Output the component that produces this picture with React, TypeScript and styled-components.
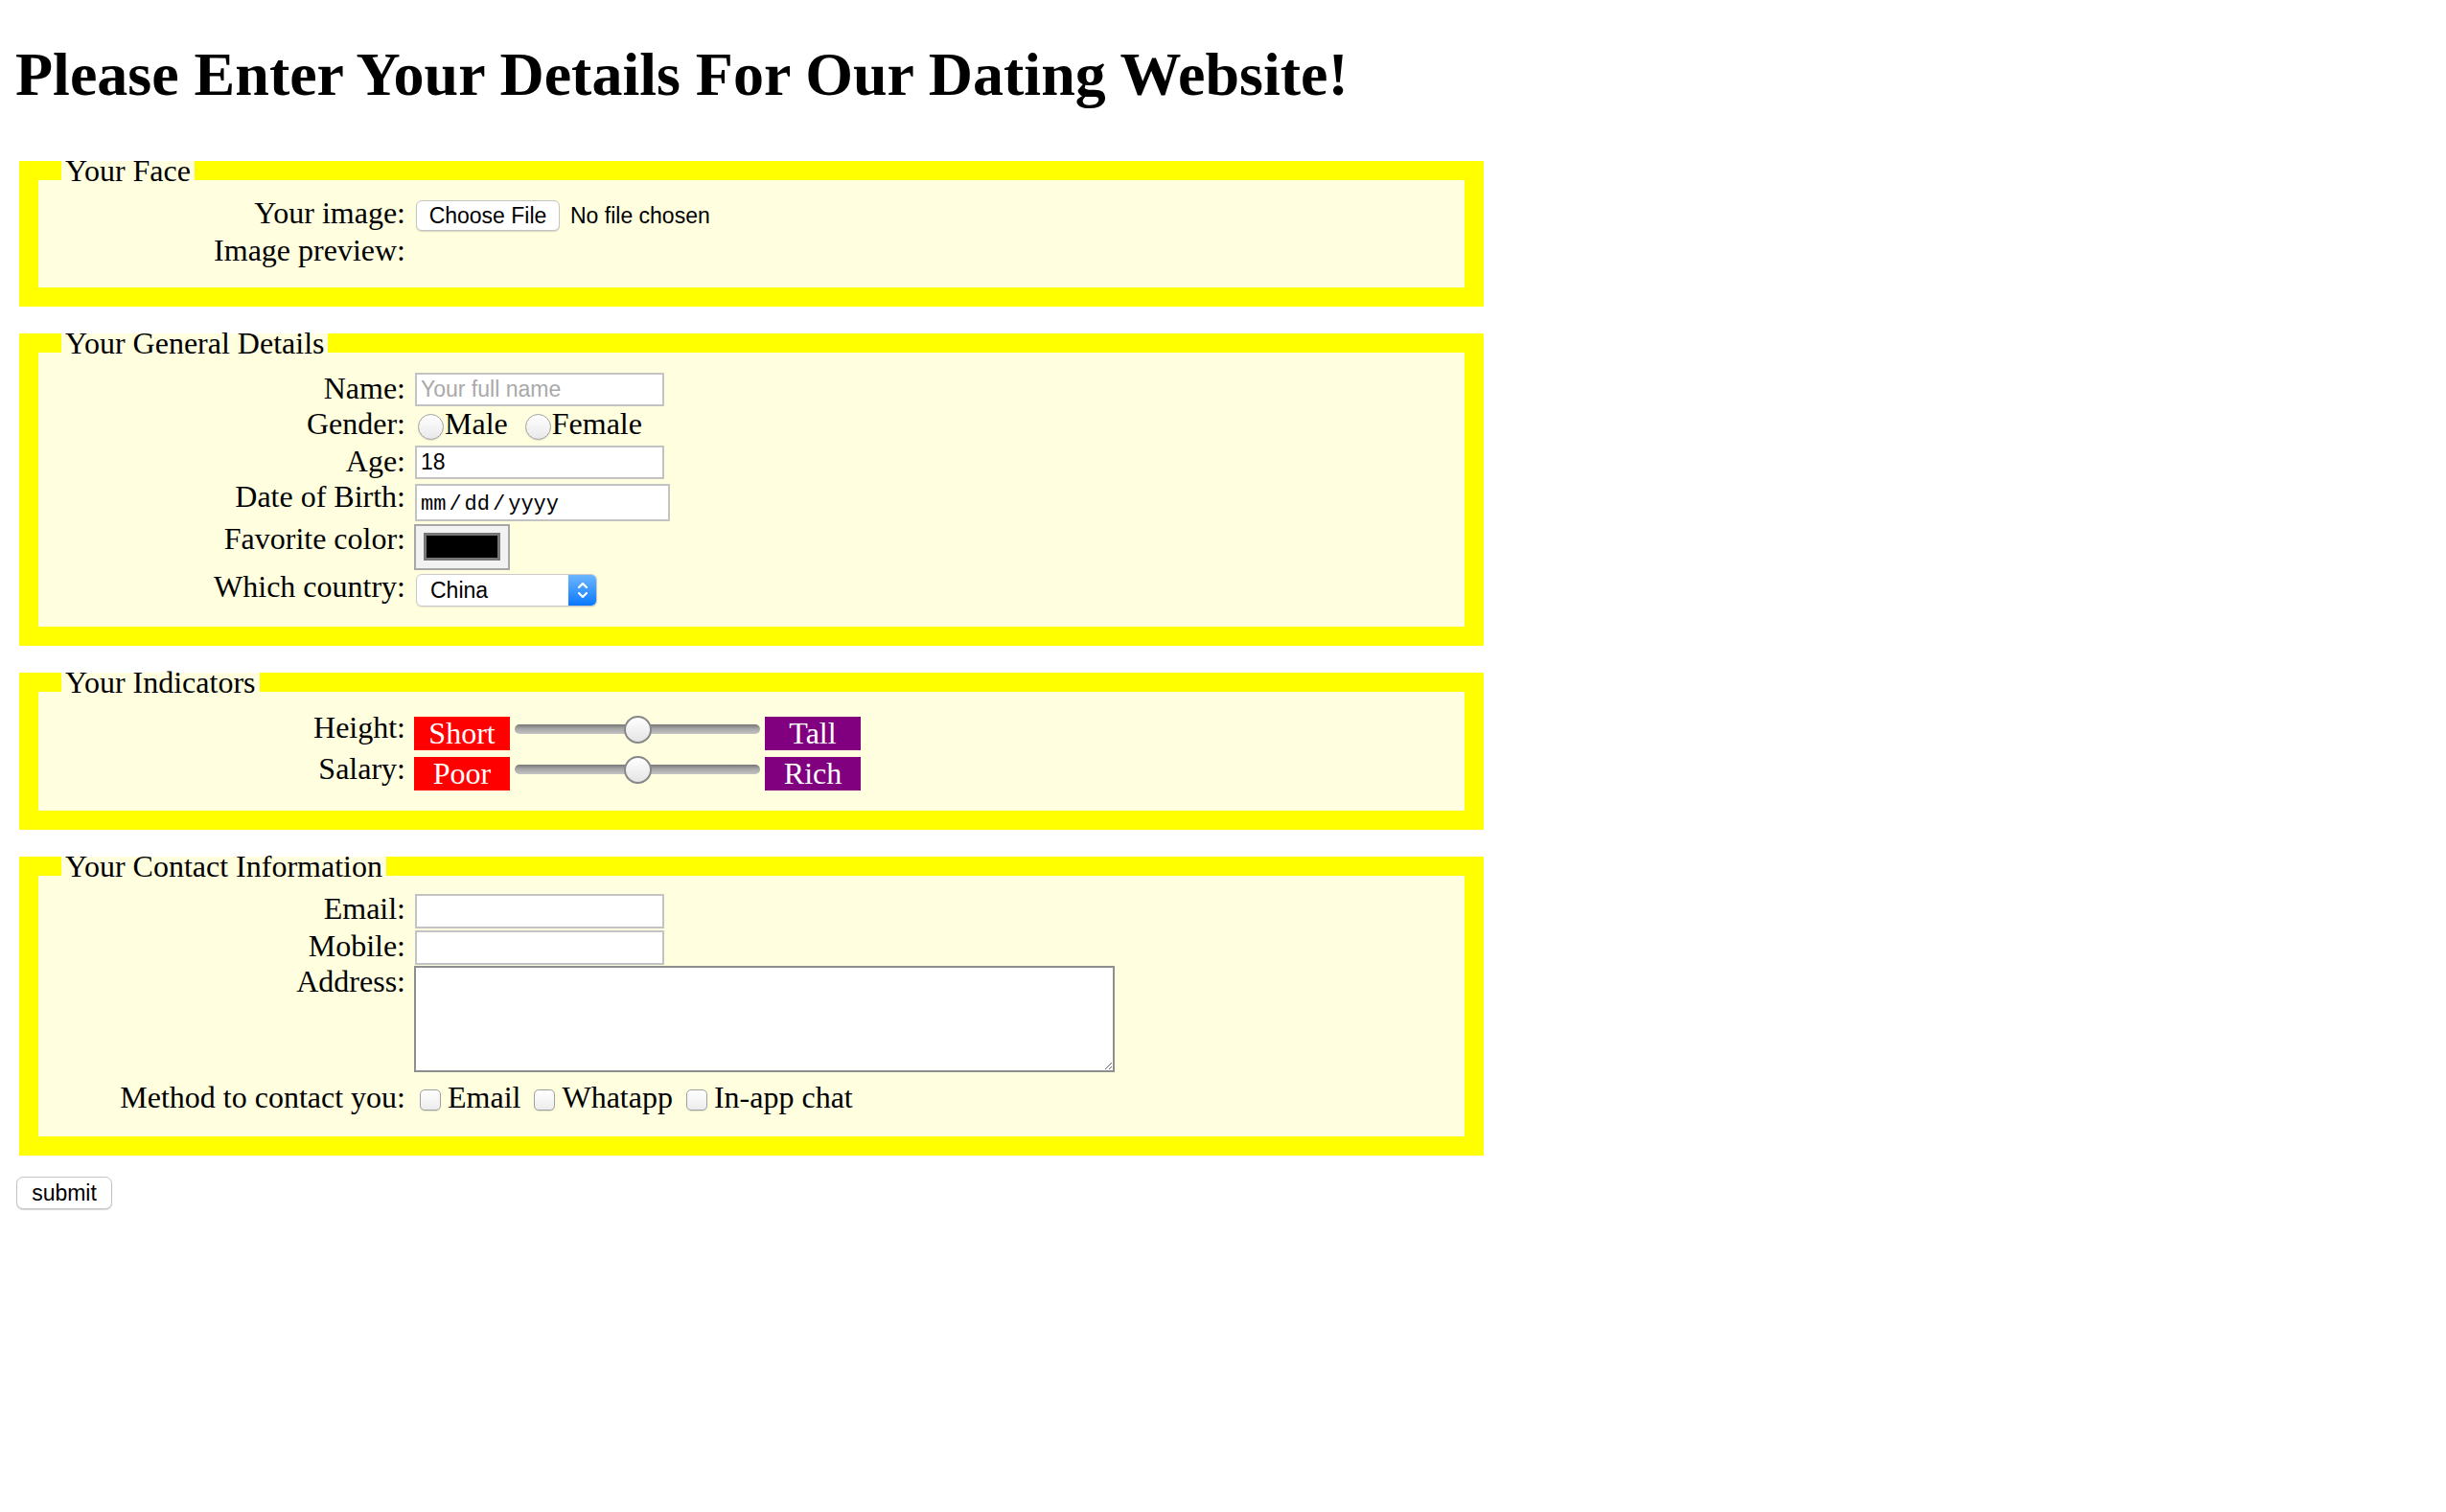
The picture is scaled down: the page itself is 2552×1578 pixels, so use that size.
import React from "react";
import styled, { createGlobalStyle } from "styled-components";

const GlobalStyle = createGlobalStyle`
  html, body { margin: 0; padding: 0; background: #ffffff; }
  body {
    font-family: "Liberation Serif", "Times New Roman", serif;
    font-size: 32px;
    color: #000000;
  }
  * { box-sizing: border-box; }
`;

const Page = styled.div`
  padding: 0 16px 40px;
`;

const Title = styled.h1`
  margin: 42px 0 46px;
  font-size: 64px;
  line-height: 72px;
  font-weight: bold;
`;

const Form = styled.form`
  width: 1536px;
`;

const Panel = styled.fieldset<{ $pt: number; $pb: number }>`
  margin: 0 4px 20px;
  border: 20px solid #ffff00;
  background: #ffffe0;
  padding: ${(p) => p.$pt}px 24px ${(p) => p.$pb}px;
  min-width: 0;
`;

const Legend = styled.legend`
  padding: 0 4px;
  font-size: 32px;
  line-height: 36px;
`;

const Row = styled.div<{ $h: number }>`
  display: flex;
  align-items: flex-start;
  height: ${(p) => p.$h}px;
`;

const Label = styled.label`
  width: 359px;
  flex: none;
  text-align: right;
  line-height: 36px;
  white-space: nowrap;
`;

const Control = styled.div<{ $top?: number; $left?: number }>`
  display: flex;
  align-items: flex-start;
  margin-top: ${(p) => p.$top ?? 0}px;
  margin-left: ${(p) => 10 + (p.$left ?? 0)}px;
`;

const sans = `"Liberation Sans", Arial, Helvetica, sans-serif`;

const TextInput = styled.input<{ $h?: number }>`
  width: 260px;
  height: ${(p) => p.$h ?? 36}px;
  margin: 0;
  border: 2px solid #c3c3c3;
  border-radius: 0;
  background: #ffffff;
  padding: 0 4px;
  font: 23px ${sans};
  color: #000000;
  outline: none;
  &::placeholder { color: #a9a9a9; }
`;

const FileButton = styled.button`
  width: 150px;
  height: 32px;
  margin: 0;
  padding: 0;
  background: #ffffff;
  border: 1px solid #c4c4c4;
  border-radius: 6px;
  box-shadow: 0 1px 1px rgba(0, 0, 0, 0.16);
  font: 23px ${sans};
  color: #000000;
`;

const FileNote = styled.span`
  margin-left: 11px;
  font: 23px ${sans};
  line-height: 32px;
`;

const Options = styled.div<{ $gap: number }>`
  display: flex;
  align-items: flex-start;
  gap: ${(p) => p.$gap}px;
`;

const Option = styled.label<{ $gap: number }>`
  display: flex;
  align-items: flex-start;
  gap: ${(p) => p.$gap}px;
  line-height: 36px;
  white-space: nowrap;
`;

const Radio = styled.input.attrs({ type: "radio" })`
  appearance: none;
  -webkit-appearance: none;
  flex: none;
  width: 27px;
  height: 27px;
  margin: 8px 0 0;
  border-radius: 50%;
  border: 1.5px solid #a0a0a0;
  background: linear-gradient(#ffffff, #e9e9e9);
  box-shadow: 0 1px 1px rgba(0, 0, 0, 0.12);
`;

const Checkbox = styled.input.attrs({ type: "checkbox" })`
  appearance: none;
  -webkit-appearance: none;
  flex: none;
  width: 22px;
  height: 22px;
  margin: 10px 0 0;
  border-radius: 5px;
  border: 1.5px solid #a0a0a0;
  background: linear-gradient(#ffffff, #ececec);
  box-shadow: 0 1px 1px rgba(0, 0, 0, 0.12);
`;

const DateField = styled.div`
  width: 266px;
  height: 39px;
  border: 2px solid #c3c3c3;
  background: #ffffff;
  padding: 4px 4px 0;
  display: flex;
  align-items: center;
  font: 22px "Liberation Mono", "Courier New", monospace;
`;

const Sep = styled.span`
  margin: 0 3px;
`;

const ColorWell = styled.input.attrs({ type: "color" })`
  width: 100px;
  height: 48px;
  margin: 0;
  padding: 0;
  border: 2px solid #a7a7a7;
  border-radius: 0;
  background: #f2f2f2;
  &::-webkit-color-swatch-wrapper { padding: 7px 8px 8px; }
  &::-webkit-color-swatch { border: 3px solid #777777; border-radius: 0; }
`;

const SelectWrap = styled.div`
  display: flex;
  width: 189px;
  height: 34px;
  border: 1px solid #cacaca;
  border-radius: 6px;
  overflow: hidden;
  background: #ffffff;
  box-shadow: 0 1px 1px rgba(0, 0, 0, 0.1);
`;

const Select = styled.select`
  appearance: none;
  -webkit-appearance: none;
  flex: 1;
  min-width: 0;
  border: 0;
  background: transparent;
  margin: 0;
  padding: 0 0 0 14px;
  font: 23px ${sans};
  color: #000000;
  outline: none;
`;

const SelectArrows = styled.span`
  width: 29px;
  flex: none;
  display: flex;
  align-items: center;
  justify-content: center;
  background: linear-gradient(#6db6ff, #0a79ff);
`;

const Tag = styled.span<{ $color: string }>`
  width: 100px;
  height: 35px;
  flex: none;
  background: ${(p) => p.$color};
  color: #ffffff;
  text-align: center;
  line-height: 35px;
  font-size: 32px;
`;

const Slider = styled.input.attrs({ type: "range" })`
  -webkit-appearance: none;
  appearance: none;
  width: 256px;
  height: 28px;
  margin: -1px 5px 0;
  padding: 0;
  background: transparent;
  &::-webkit-slider-runnable-track {
    height: 10px;
    border-radius: 5px;
    background: linear-gradient(#777777, #a6a6a6 45%, #c4c4c4);
  }
  &::-webkit-slider-thumb {
    -webkit-appearance: none;
    width: 29px;
    height: 29px;
    margin-top: -9.5px;
    border-radius: 50%;
    border: 2px solid #888888;
    background: linear-gradient(#ffffff, #e4e4e4);
  }
`;

const TextArea = styled.textarea`
  width: 731px;
  height: 111px;
  margin: 0;
  border: 2px solid #8e8e8e;
  background: #ffffff;
  padding: 4px;
  font: 22px "Liberation Mono", monospace;
  resize: both;
  outline: none;
`;

const Actions = styled.div`
  display: flex;
  padding: 2px 0 0 1px;
`;

const SubmitButton = styled.button`
  width: 100px;
  height: 34px;
  margin: 0;
  padding: 0;
  background: #ffffff;
  border: 1px solid #c4c4c4;
  border-radius: 7px;
  box-shadow: 0 1px 1px rgba(0, 0, 0, 0.16);
  font: 23px ${sans};
  color: #000000;
`;

const Chevrons = () => (
  <svg width="12" height="24" viewBox="0 0 12 24" fill="none">
    <path d="M2 9 L6 5 L10 9" stroke="#ffffff" strokeWidth="2.2" strokeLinecap="round" strokeLinejoin="round" />
    <path d="M2 15 L6 19 L10 15" stroke="#ffffff" strokeWidth="2.2" strokeLinecap="round" strokeLinejoin="round" />
  </svg>
);

export default function App() {
  return (
    <Page>
      <GlobalStyle />
      <Title>Please Enter Your Details For Our Dating Website!</Title>
      <Form onSubmit={(e) => e.preventDefault()}>
        <Panel $pt={8} $pb={21}>
          <Legend>Your Face</Legend>
          <Row $h={39}>
            <Label>Your image:</Label>
            <Control $top={5} $left={1}>
              <FileButton type="button">Choose File</FileButton>
              <FileNote>No file chosen</FileNote>
            </Control>
          </Row>
          <Row $h={36}>
            <Label>Image preview:</Label>
          </Row>
        </Panel>

        <Panel $pt={11} $pb={21}>
          <Legend>Your General Details</Legend>
          <Row $h={37}>
            <Label>Name:</Label>
            <Control $top={2}>
              <TextInput $h={35} placeholder="Your full name" />
            </Control>
          </Row>
          <Row $h={39}>
            <Label>Gender:</Label>
            <Control $left={3}>
              <Options $gap={18}>
                <Option $gap={1}>
                  <Radio name="gender" />
                  Male
                </Option>
                <Option $gap={1}>
                  <Radio name="gender" />
                  Female
                </Option>
              </Options>
            </Control>
          </Row>
          <Row $h={37}>
            <Label>Age:</Label>
            <Control $top={2}>
              <TextInput $h={35} defaultValue="18" />
            </Control>
          </Row>
          <Row $h={44}>
            <Label>Date of Birth:</Label>
            <Control $top={5}>
              <DateField>
                mm<Sep>/</Sep>dd<Sep>/</Sep>yyyy
              </DateField>
            </Control>
          </Row>
          <Row $h={50}>
            <Label>Favorite color:</Label>
            <Control $top={3} $left={-1}>
              <ColorWell defaultValue="#000000" />
            </Control>
          </Row>
          <Row $h={39}>
            <Label>Which country:</Label>
            <Control $top={5} $left={1}>
              <SelectWrap>
                <Select defaultValue="China">
                  <option>China</option>
                  <option>Japan</option>
                  <option>USA</option>
                </Select>
                <SelectArrows>
                  <Chevrons />
                </SelectArrows>
              </SelectWrap>
            </Control>
          </Row>
        </Panel>

        <Panel $pt={11} $pb={20}>
          <Legend>Your Indicators</Legend>
          <Row $h={43}>
            <Label>Height:</Label>
            <Control $top={7} $left={-1}>
              <Tag $color="#ff0000">Short</Tag>
              <Slider defaultValue={50} />
              <Tag $color="#800080">Tall</Tag>
            </Control>
          </Row>
          <Row $h={42}>
            <Label>Salary:</Label>
            <Control $top={6} $left={-1}>
              <Tag $color="#ff0000">Poor</Tag>
              <Slider defaultValue={50} />
              <Tag $color="#800080">Rich</Tag>
            </Control>
          </Row>
        </Panel>

        <Panel $pt={8} $pb={23}>
          <Legend>Your Contact Information</Legend>
          <Row $h={39}>
            <Label>Email:</Label>
            <Control $top={3}>
              <TextInput type="email" />
            </Control>
          </Row>
          <Row $h={37}>
            <Label>Mobile:</Label>
            <Control $top={2}>
              <TextInput type="tel" />
            </Control>
          </Row>
          <Row $h={121}>
            <Label>Address:</Label>
            <Control $top={2} $left={-1}>
              <TextArea />
            </Control>
          </Row>
          <Row $h={36}>
            <Label>Method to contact you:</Label>
            <Control $left={5}>
              <Options $gap={14}>
                <Option $gap={7}>
                  <Checkbox />
                  Email
                </Option>
                <Option $gap={7}>
                  <Checkbox />
                  Whatapp
                </Option>
                <Option $gap={7}>
                  <Checkbox />
                  In-app chat
                </Option>
              </Options>
            </Control>
          </Row>
        </Panel>
        <Actions>
          <SubmitButton type="submit">submit</SubmitButton>
        </Actions>
      </Form>
    </Page>
  );
}
